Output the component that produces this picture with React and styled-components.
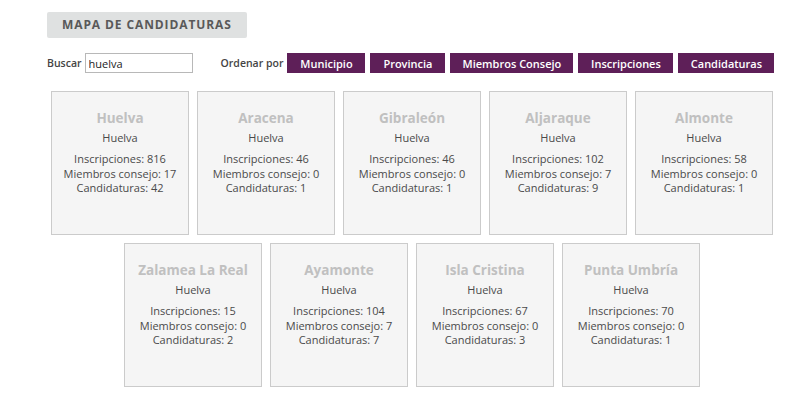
import React from "react";
import styled, { createGlobalStyle } from "styled-components";

const GlobalStyle = createGlobalStyle`
  body {
    margin: 0;
    background: #ffffff;
    font-family: "Open Sans", "DejaVu Sans", sans-serif;
  }
`;

const Page = styled.div`
  padding: 12px 0 0 47px;
  width: 730px;
`;

const Title = styled.div`
  display: inline-block;
  background: #dfe1e1;
  border-radius: 2px;
  padding: 0 15px;
  height: 26px;
  line-height: 26px;
  color: #595959;
  font-size: 12px;
  font-weight: 700;
  letter-spacing: 0.9px;
`;

const Toolbar = styled.div`
  display: flex;
  align-items: center;
  margin-top: 14px;
  height: 22px;
`;

const Label = styled.span`
  white-space: nowrap;
  font-size: 10.5px;
  font-weight: 600;
  color: #444;
  margin-left: ${p => p.offset || 0}px;
  margin-right: 3px;
`;

const SearchInput = styled.input`
  box-sizing: border-box;
  width: 108px;
  height: 20px;
  border: 1px solid #b8b8b8;
  padding: 0 3px;
  font-family: inherit;
  font-size: 11px;
  color: #222;
  outline: none;
`;

const SortButton = styled.button`
  box-sizing: border-box;
  height: 20px;
  padding: 0;
  width: ${p => p.w}px;
  margin-left: ${p => (p.first ? 1 : 5)}px;
  border: none;
  background: #5e1f58;
  color: #fff;
  font-family: inherit;
  font-size: 11px;
  font-weight: 600;
  cursor: pointer;
`;

const Grid = styled.div`
  display: flex;
  flex-wrap: wrap;
  justify-content: center;
  gap: 8px;
  margin-top: 17px;
  padding: 0 4px;
`;

const Card = styled.div`
  box-sizing: border-box;
  width: 138px;
  height: 144px;
  background: #f5f5f5;
  border: 1px solid #cbcbcb;
  text-align: center;
  padding-top: 17px;
`;

const Town = styled.h2`
  margin: 0;
  font-size: 13.5px;
  font-weight: 700;
  color: #c0c0c0;
  line-height: 19px;
`;

const Province = styled.div`
  margin-top: 3px;
  font-size: 11px;
  color: #4a4a4a;
  line-height: 14px;
`;

const Stats = styled.div`
  margin-top: 7px;
  font-size: 11px;
  color: #4a4a4a;
  line-height: 14.7px;
`;

const sorts = [
  ["Municipio", 78],
  ["Provincia", 75],
  ["Miembros Consejo", 123],
  ["Inscripciones", 95],
  ["Candidaturas", 96],
];

const towns = [
  ["Huelva", 816, 17, 42],
  ["Aracena", 46, 0, 1],
  ["Gibraleón", 46, 0, 1],
  ["Aljaraque", 102, 7, 9],
  ["Almonte", 58, 0, 1],
  ["Zalamea La Real", 15, 0, 2],
  ["Ayamonte", 104, 7, 7],
  ["Isla Cristina", 67, 0, 3],
  ["Punta Umbría", 70, 0, 1],
];

export default function App() {
  return (
    <Page>
      <GlobalStyle />
      <Title>MAPA DE CANDIDATURAS</Title>
      <Toolbar>
        <Label>Buscar</Label>
        <SearchInput defaultValue="huelva" />
        <Label offset={28}>Ordenar por</Label>
        {sorts.map(([name, w], i) => (
          <SortButton key={name} w={w} first={i === 0}>
            {name}
          </SortButton>
        ))}
      </Toolbar>
      <Grid>
        {towns.map(([name, ins, mem, cand]) => (
          <Card key={name}>
            <Town>{name}</Town>
            <Province>Huelva</Province>
            <Stats>
              Inscripciones: {ins}
              <br />
              Miembros consejo: {mem}
              <br />
              Candidaturas: {cand}
            </Stats>
          </Card>
        ))}
      </Grid>
    </Page>
  );
}
